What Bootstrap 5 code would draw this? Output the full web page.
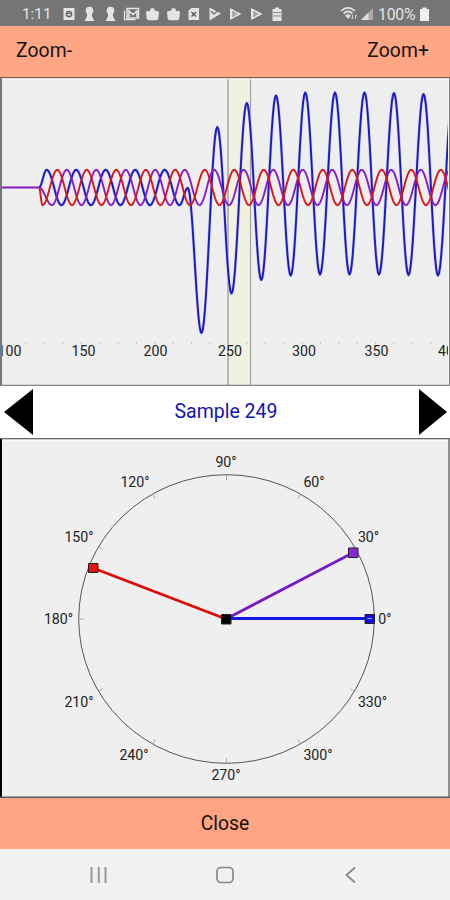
<!DOCTYPE html>
<html lang="en">
<head>
<meta charset="utf-8">
<meta name="viewport" content="width=device-width, initial-scale=1">
<title>Sample 249</title>
<link href="https://cdn.jsdelivr.net/npm/bootstrap@5.3.0/dist/css/bootstrap.min.css" rel="stylesheet">
<style>
  body { font-family: Roboto, sans-serif; background: #f1f1f1; height: 900px; overflow: hidden; }
  svg { display: block; flex: none; }
  .status-bar { height: 26px; background: #757575; color: #e4e4e4; font-size: 15.3px; padding: 3px 20px 0 22px; }
  .clock { width: 40px; }
  .battery-text { font-size: 15.8px; letter-spacing: -.2px; width: 41px; }
  .action-bar { height: 51px; background: #ffa685; }
  .action-bar .btn { font-size: 19.3px; color: #171210; line-height: 1; border: 0; border-radius: 0; }
  .zoom-bar { padding: 0 10px 2px 5px; }
  .zoom-bar .btn { padding: 6px 11px; letter-spacing: .1px; }
  .close-bar .btn { background: #ffa583; width: 122px; height: 43px; padding-bottom: 6px; }
  .plot { background: #eee; }
  .sample-bar { height: 52px; padding: 0 2px 0 4px; }
  .sample-name { color: #1414b4; font-size: 19.5px; }
  .phone-nav { height: 51px; background: #f1f1f1; padding: 0 89px; }
  .axis { font: 14.2px Roboto, sans-serif; fill: #222; text-anchor: middle; }
</style>
<script src="https://cdn.jsdelivr.net/npm/bootstrap@5.3.0/dist/js/bootstrap.bundle.min.js"></script>
</head>
<body class="d-flex flex-column">
  <header class="status-bar d-flex justify-content-between lh-1">
    <div class="d-flex">
      <span class="clock pt-1">1:11</span>
      <svg width="224" height="20" viewBox="62 3 224 20" fill="#e4e4e4">
        <path d="M63.500 8h11v12h-11z"/><circle cx="69" cy="14" r="2.600" fill="none" stroke="#666" stroke-width="1.500"/><path d="M67 13.500h4" stroke="#666"/>
        <g id="pawn"><circle cx="89.500" cy="10.500" r="3.800"/><path d="M86.500 12h6l-.8 3.500 2.600 5.500h-9.600l2.600-5.500z"/></g>
        <use href="#pawn" x="21"/>
        <path d="M124.500 10.500v9h11" fill="none" stroke="#e4e4e4" stroke-width="1.300"/><path d="M127 8.500h11.500v9.500H127z" fill="none" stroke="#e4e4e4" stroke-width="1.500"/><path d="M129 17v-6l4 3.500 4-3.500v6" fill="none" stroke="#e4e4e4" stroke-width="1.600"/>
        <g id="bag"><path d="M147.500 11h10q1.500 0 1.500 1.500l-.7 6q-.2 1.800-1.800 1.800h-8q-1.600 0-1.800-1.800l-.7-6q0-1.500 1.500-1.500z"/><path d="M149.500 12l1-3q2-2 4 0l1 3z"/></g>
        <use href="#bag" x="21"/>
        <path d="M188.500 10.500l3-2.500h7.500v12h-10.500z"/><path d="M191.500 12l4.500 4.500m0-4.500l-4.500 4.500" stroke="#555" stroke-width="1.300"/>
        <path d="M209.500 7.500l11.500 6-11.500 7z"/><path d="M211 11l3 3 5.500-5" fill="none" stroke="#757575" stroke-width="1.300"/>
        <g id="play"><path d="M230 8l11.500 6-11.500 6z"/><path d="M233 11l5 3-5 3z" fill="#aaa"/><path d="M233 11v6" stroke="#888"/></g>
        <use href="#play" x="21"/>
        <path d="M275 7.500h4V9h2.500v12h-9V9h2.500z"/><path d="M273 12.500h8m-8 3.500h8" stroke="#8b8b8b"/>
      </svg>
    </div>
    <div class="d-flex">
      <svg width="38" height="20" viewBox="338 3 38 20" fill="none" stroke="#dedede">
        <path d="M339 11q7-6.500 14 0M341.500 13.500q4.500-4 9 0" stroke-width="1.700"/><path d="M343 15.500q3-2.500 6 0l-3 3.500z" fill="#dedede" stroke="none"/><path d="M350.500 15v4m-1.500-1.500l1.500 1.500m3 0v-4m0 0l1.500 1.500" stroke-width=".9"/>
        <path d="M359 20l12-12v12z" fill="#aaa" stroke="none"/><path d="M359 20l7.500-7.500V20z" fill="#dedede" stroke="none"/>
      </svg>
      <span class="pt-1 battery-text">100%</span>
      <svg width="11" height="20" viewBox="418 3 11 20" fill="#eee"><path d="M421.500 7.500h4V9h2.500v12h-9V9h2.500z"/></svg>
    </div>
  </header>

  <nav class="action-bar zoom-bar d-flex justify-content-between align-items-center">
    <button class="btn">Zoom-</button>
    <button class="btn">Zoom+</button>
  </nav>

  <svg class="plot" width="450" height="309" viewBox="0 77 450 309">
    <path d="M228 78h22v308h-22z" fill="#f0f1df"/>
    <path d="M228 78v308" stroke="#a9a9a4" stroke-width="1.600"/>
    <path d="M250.500 78v308" stroke="#a2a29f" stroke-width="1.200"/>
    <g id="minor" stroke="#c4c4c4"></g>
    <g id="waves" fill="none" stroke-width="1.900" stroke-linejoin="round"></g>
    <g class="axis">
      <text x="9.500" y="355.500">100</text><text x="83.500" y="355.500">150</text><text x="155.500" y="355.500">200</text>
      <text x="230" y="355.500">250</text><text x="304" y="355.500">300</text><text x="376.500" y="355.500">350</text><text x="450" y="355.500">400</text>
    </g>
    <path d="M0 77.500h450" stroke="#85594b" stroke-width="1.500"/>
    <path d="M2 79h446" stroke="#fafafa"/>
    <path d="M1 78v308" stroke="#777" stroke-width="2"/>
    <path d="M448.500 78v308" stroke="#f8f8f8"/><path d="M449.500 78v308" stroke="#777"/>
    <path d="M0 385.500h450" stroke="#858585" stroke-width="1.300"/>
  </svg>

  <div class="sample-bar bg-white d-flex justify-content-between align-items-center">
    <svg width="29" height="46" viewBox="0 0 29 46"><path d="M0 23L29 0v46z"/></svg>
    <span class="sample-name">Sample 249</span>
    <svg width="29" height="46" viewBox="0 0 29 46"><path d="M28 23L0 0v46z"/></svg>
  </div>

  <svg class="plot" width="450" height="360" viewBox="0 438 450 360">
    <path d="M0 438h450v360H0z" fill="#efefef"/>
    <ellipse cx="226.500" cy="619" rx="147.800" ry="144.300" fill="none" stroke="#555"/>
    <g id="spokes" stroke="#aaa"></g>
    <g class="axis">
      <text x="226" y="467">90°</text><text x="135" y="487">120°</text><text x="314" y="487">60°</text>
      <text x="79" y="541.500">150°</text><text x="368.500" y="541.500">30°</text><text x="58.500" y="623.500">180°</text><text x="385" y="623.500">0°</text>
      <text x="79" y="706.500">210°</text><text x="372.500" y="706.500">330°</text><text x="134" y="760">240°</text><text x="318" y="760">300°</text><text x="226" y="780">270°</text>
    </g>
    <g stroke-width="2.800">
      <path d="M226 619L353.500 552.500" stroke="#751ac4"/>
      <path d="M226 618.500H369" stroke="#1717e4"/>
      <path d="M226 619L93 568" stroke="#df0808"/>
    </g>
    <g stroke="#222" stroke-width="1">
      <path d="M348.500 548h9.500v9.500h-9.500z" fill="#8526d8"/>
      <path d="M365 614.500h9.500v9h-9.500z" fill="#1010df"/>
      <path d="M88.500 563.500h9.500v9h-9.500z" fill="#f00d0d"/>
      <path d="M221.500 614.500h9.500v9.500h-9.500z" fill="#000"/>
    </g>
    <path d="M367.500 618.500h4.500" stroke="#aaf"/>
    <path d="M0 438.500h450" stroke="#666" stroke-width="1.600"/><path d="M2 440.500h446" stroke="#f9f9f9"/>
    <path d="M1 439v359" stroke="#000" stroke-width="2"/><path d="M449 439v359" stroke="#777" stroke-width="1.600"/>
    <path d="M0 797.200h450" stroke="#5d5d63" stroke-width="1.600"/>
  </svg>

  <div class="action-bar close-bar d-flex justify-content-center align-items-center">
    <button class="btn">Close</button>
  </div>

  <footer class="phone-nav d-flex justify-content-between align-items-center">
    <svg width="20" height="18" viewBox="0 0 20 18" stroke="#999" stroke-width="2"><path d="M2.500 1v16M9.800 1v16M16.500 1v16"/></svg>
    <svg width="18" height="18" viewBox="0 0 18 18" fill="none" stroke="#888" stroke-width="1.700"><rect x="1" y="1.500" width="16" height="15" rx="4"/></svg>
    <svg width="20" height="18" viewBox="-4 0 20 18" fill="none" stroke="#888" stroke-width="1.700"><path d="M10 1.500L1.500 9l8.500 7.500"/></svg>
  </footer>

<script>
  // Smooth trace through a list of turning points, joined by half cosines.
  function trace(points, color, halo) {
    let d = 'M' + points[0];
    for (let i = 1; i < points.length; i++) {
      const [x0, y0] = points[i - 1], [x1, y1] = points[i];
      for (let k = 1; k <= 14; k++) {
        const t = k / 14;
        d += 'L' + (x0 + (x1 - x0) * t).toFixed(2) + ' ' + (y0 + (y1 - y0) * (1 - Math.cos(Math.PI * t)) / 2).toFixed(2);
      }
    }
    if (halo) add('waves', d, halo).setAttribute('stroke-width', 3);
    add('waves', d, color);
  }
  function add(group, d, color) {
    const p = document.createElementNS('http://www.w3.org/2000/svg', 'path');
    p.setAttribute('d', d);
    if (color) p.setAttribute('stroke', color);
    document.getElementById(group).append(p);
    return p;
  }
  function steady(x, up, end) {
    const out = [];
    for (; x < end; x += 14.75, up = !up) out.push([x, up ? 169.8 : 205.2]);
    return out;
  }
  trace([[39, 187.5], ...steady(46.7, true, 182), [187.8, 188], [201.5, 333], [217.3, 127], [231.5, 293.5], [246.8, 103], [261.3, 280],
    [276, 95.5], [290.7, 275.5], [305.3, 92.5], [320, 274.5], [335, 92.5], [349.5, 274.5], [364.5, 92.5], [379, 274.5],
    [394, 93], [408.5, 275], [423.6, 94], [438, 275.5], [453, 94]], '#1a1ac4', '#c4c4ea');
  trace([[2, 187.5], [39, 187.5], ...steady(52, false, 470)], '#861bc8');
  trace([[39, 187.5], ...steady(42.5, false, 470)], '#dd1515');

  for (let x = 26; x < 445; x += 18.4) add('minor', `M${x} 342v2`);
  for (let a = 0; a < 360; a += 30) {
    const c = Math.cos(a * Math.PI / 180), s = Math.sin(a * Math.PI / 180);
    add('spokes', `M${226.5 + 147 * c} ${619 - 144 * s}L${226.5 + 143 * c} ${619 - 139 * s}`);
  }
</script>
</body>
</html>
